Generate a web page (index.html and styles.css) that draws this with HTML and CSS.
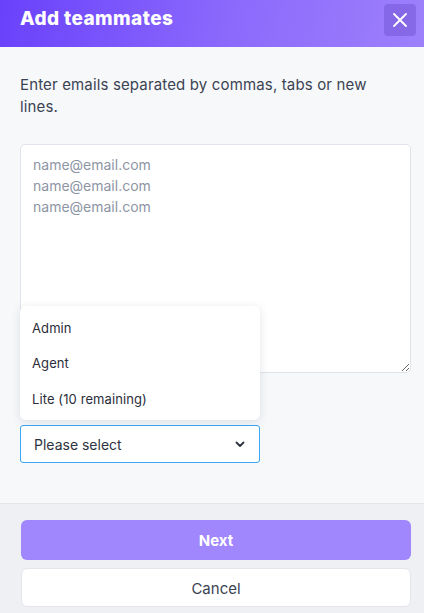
FILE: index.html
```html
<!DOCTYPE html>
<html lang="en">
<head>
    <meta charset="UTF-8">
    <meta name="viewport" content="width=device-width, initial-scale=1.0">
    <title>Add teammates</title>
    <link rel="stylesheet" href="styles.css">
</head>
<body>
    <div class="modal">
        <header class="modal-header">
            <h1>Add teammates</h1>
            <button class="close-btn" type="button" aria-label="Close">
                <svg width="16" height="16" viewBox="0 0 16 16">
                    <path d="M2 2 L14 14 M14 2 L2 14" stroke="#fff" stroke-width="1.8" stroke-linecap="round"/>
                </svg>
            </button>
        </header>

        <div class="modal-body">
            <p class="hint">Enter emails separated by commas, tabs or new lines.</p>
            <textarea class="emails" placeholder="name@email.com&#10;name@email.com&#10;name@email.com"></textarea>

            <div class="role-picker">
                <ul class="role-menu">
                    <li>Admin</li>
                    <li>Agent</li>
                    <li>Lite (10 remaining)</li>
                </ul>
                <div class="role-select">
                    <span>Please select</span>
                    <svg width="10" height="7" viewBox="0 0 10 7">
                        <path d="M1.5 1.5 L5 5 L8.5 1.5" fill="none" stroke="#2d3340" stroke-width="1.8" stroke-linecap="round" stroke-linejoin="round"/>
                    </svg>
                </div>
            </div>
        </div>

        <footer class="modal-footer">
            <button class="btn btn-primary" type="button">Next</button>
            <button class="btn btn-secondary" type="button">Cancel</button>
        </footer>
    </div>
</body>
</html>
```

FILE: styles.css
```css
/* Page */
body {
    margin: 0;
    font-family: 'Inter', 'Lato', sans-serif;
    background: #f7f8fa;
    color: #3b4352;
}

.modal {
    width: 424px;
    height: 613px;
    display: flex;
    flex-direction: column;
}

/* Header */
.modal-header {
    height: 47px;
    display: flex;
    align-items: flex-start;
    justify-content: space-between;
    padding: 4px 8px 0 20px;
    background: linear-gradient(100deg, #6a41fb 0%, #8c6afc 55%, #9d80fb 100%);
    box-sizing: border-box;
}

.modal-header h1 {
    margin: 0;
    font-size: 19px;
    line-height: 30px;
    font-weight: 800;
    color: #fff;
    letter-spacing: 0.4px;
}

.close-btn {
    width: 32px;
    height: 32px;
    border: none;
    border-radius: 4px;
    background: rgba(60, 30, 160, 0.22);
    display: flex;
    align-items: center;
    justify-content: center;
    padding: 0;
}

/* Body */
.modal-body {
    flex: 1;
    padding: 27px 13px 0 20px;
}

.hint {
    margin: 0;
    font-size: 15px;
    line-height: 22px;
    color: #3b4352;
    letter-spacing: 0.15px;
    padding-right: 20px;
}

.emails {
    display: block;
    width: 391px;
    height: 229px;
    margin-top: 26px;
    box-sizing: border-box;
    border: 1px solid #e0e3ea;
    border-radius: 5px;
    background: #fff;
    padding: 9px 12px;
    font-family: inherit;
    font-size: 14px;
    line-height: 21px;
    resize: vertical;
    outline: none;
}

.emails::placeholder {
    color: #8d95a5;
}

/* Role dropdown */
.role-picker {
    position: relative;
    width: 240px;
    margin-top: 52px;
}

.role-menu {
    position: absolute;
    left: 0;
    bottom: 43px;
    width: 240px;
    margin: 0;
    padding: 5px 0 3px;
    list-style: none;
    background: #fff;
    border-radius: 6px;
    box-shadow: 0 2px 10px rgba(30, 40, 70, 0.12);
}

.role-menu li {
    padding: 0 12px;
    height: 35.5px;
    line-height: 35.5px;
    font-size: 13px;
    color: #2b2d3a;
    letter-spacing: 0.1px;
}

.role-select {
    height: 38px;
    box-sizing: border-box;
    border: 1px solid #3aa8f2;
    border-radius: 3px;
    background: #fff;
    display: flex;
    align-items: center;
    justify-content: space-between;
    padding: 1px 14px 0 13px;
    font-size: 14px;
    color: #2d3340;
}

/* Footer */
.modal-footer {
    border-top: 1px solid #e3e5ea;
    background: #eff0f4;
    padding: 16px 13px 6px 21px;
    display: flex;
    flex-direction: column;
    gap: 8px;
}

.btn {
    width: 390px;
    font-family: inherit;
    font-size: 15px;
    border-radius: 6px;
    cursor: pointer;
}

.btn-primary {
    height: 40px;
    border: none;
    background: #a087fe;
    color: #fff;
    font-weight: 700;
}

.btn-secondary {
    height: 39px;
    border: 1px solid #e3e5ea;
    background: #fff;
    color: #3b4352;
    padding-top: 2px;
}
```
